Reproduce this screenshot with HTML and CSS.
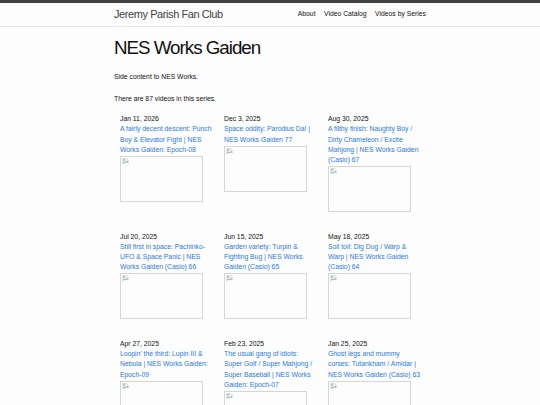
FILE: index.html
```html
<!DOCTYPE html>
<html lang="en">
<head>
<meta charset="utf-8">
<title>NES Works Gaiden | Jeremy Parish Fan Club</title>
<link rel="stylesheet" href="styles.css">
</head>
<body>
<header class="site-header">
  <div class="wrapper header-inner">
    <a class="site-title" href="#">Jeremy Parish Fan Club</a>
    <nav class="site-nav">
      <a class="page-link" href="#">About</a>
      <a class="page-link" href="#">Video Catalog</a>
      <a class="page-link" href="#">Videos by Series</a>
    </nav>
  </div>
</header>
<main class="page-content">
  <div class="wrapper">
    <h1 class="page-heading">NES Works Gaiden</h1>
    <p class="desc">Side content to NES Works.</p>
    <p class="count">There are 87 videos in this series.</p>
    <ul class="video-grid">
      <li class="video">
        <div class="date">Jan 11, 2026</div>
        <a class="title" href="#">A fairly decent descent: Punch Boy &amp; Elevator Fight | NES Works Gaiden: Epoch-08</a>
        <div class="thumb"><svg class="broken" viewBox="0 0 16 16"><path d="M2 1h8l4 4v6l-3-2-3 3-2-2-4 3z" fill="#f4f4f4" stroke="#a8a8a8" stroke-width="1"/><path d="M3 12l3-3 2 2 3-3 3 2" fill="none" stroke="#5a9c4a" stroke-width="1.4"/><rect x="3" y="3" width="4" height="3" fill="#7cb0e0"/></svg></div>
      </li>
      <li class="video">
        <div class="date">Dec 3, 2025</div>
        <a class="title" href="#">Space oddity: Parodius Da! | NES Works Gaiden 77</a>
        <div class="thumb"><svg class="broken" viewBox="0 0 16 16"><path d="M2 1h8l4 4v6l-3-2-3 3-2-2-4 3z" fill="#f4f4f4" stroke="#a8a8a8" stroke-width="1"/><path d="M3 12l3-3 2 2 3-3 3 2" fill="none" stroke="#5a9c4a" stroke-width="1.4"/><rect x="3" y="3" width="4" height="3" fill="#7cb0e0"/></svg></div>
      </li>
      <li class="video">
        <div class="date">Aug 30, 2025</div>
        <a class="title" href="#">A filthy finish: Naughty Boy / Dirty Chameleon / Excite Mahjong | NES Works Gaiden (Casio) 67</a>
        <div class="thumb"><svg class="broken" viewBox="0 0 16 16"><path d="M2 1h8l4 4v6l-3-2-3 3-2-2-4 3z" fill="#f4f4f4" stroke="#a8a8a8" stroke-width="1"/><path d="M3 12l3-3 2 2 3-3 3 2" fill="none" stroke="#5a9c4a" stroke-width="1.4"/><rect x="3" y="3" width="4" height="3" fill="#7cb0e0"/></svg></div>
      </li>
      <li class="video">
        <div class="date">Jul 20, 2025</div>
        <a class="title" href="#">Still first in space: Pachinko-UFO &amp; Space Panic | NES Works Gaiden (Casio) 66</a>
        <div class="thumb"><svg class="broken" viewBox="0 0 16 16"><path d="M2 1h8l4 4v6l-3-2-3 3-2-2-4 3z" fill="#f4f4f4" stroke="#a8a8a8" stroke-width="1"/><path d="M3 12l3-3 2 2 3-3 3 2" fill="none" stroke="#5a9c4a" stroke-width="1.4"/><rect x="3" y="3" width="4" height="3" fill="#7cb0e0"/></svg></div>
      </li>
      <li class="video">
        <div class="date">Jun 15, 2025</div>
        <a class="title" href="#">Garden variety: Turpin &amp; Fighting Bug | NES Works Gaiden (Casio) 65</a>
        <div class="thumb"><svg class="broken" viewBox="0 0 16 16"><path d="M2 1h8l4 4v6l-3-2-3 3-2-2-4 3z" fill="#f4f4f4" stroke="#a8a8a8" stroke-width="1"/><path d="M3 12l3-3 2 2 3-3 3 2" fill="none" stroke="#5a9c4a" stroke-width="1.4"/><rect x="3" y="3" width="4" height="3" fill="#7cb0e0"/></svg></div>
      </li>
      <li class="video">
        <div class="date">May 18, 2025</div>
        <a class="title" href="#">Soil toil: Dig Dug / Warp &amp; Warp | NES Works Gaiden (Casio) 64</a>
        <div class="thumb"><svg class="broken" viewBox="0 0 16 16"><path d="M2 1h8l4 4v6l-3-2-3 3-2-2-4 3z" fill="#f4f4f4" stroke="#a8a8a8" stroke-width="1"/><path d="M3 12l3-3 2 2 3-3 3 2" fill="none" stroke="#5a9c4a" stroke-width="1.4"/><rect x="3" y="3" width="4" height="3" fill="#7cb0e0"/></svg></div>
      </li>
      <li class="video">
        <div class="date">Apr 27, 2025</div>
        <a class="title" href="#">Loopin' the third: Lupin III &amp; Nebula | NES Works Gaiden: Epoch-09</a>
        <div class="thumb"><svg class="broken" viewBox="0 0 16 16"><path d="M2 1h8l4 4v6l-3-2-3 3-2-2-4 3z" fill="#f4f4f4" stroke="#a8a8a8" stroke-width="1"/><path d="M3 12l3-3 2 2 3-3 3 2" fill="none" stroke="#5a9c4a" stroke-width="1.4"/><rect x="3" y="3" width="4" height="3" fill="#7cb0e0"/></svg></div>
      </li>
      <li class="video">
        <div class="date">Feb 23, 2025</div>
        <a class="title" href="#">The usual gang of idiots: Super Golf / Super Mahjong / Super Baseball | NES Works Gaiden: Epoch-07</a>
        <div class="thumb"><svg class="broken" viewBox="0 0 16 16"><path d="M2 1h8l4 4v6l-3-2-3 3-2-2-4 3z" fill="#f4f4f4" stroke="#a8a8a8" stroke-width="1"/><path d="M3 12l3-3 2 2 3-3 3 2" fill="none" stroke="#5a9c4a" stroke-width="1.4"/><rect x="3" y="3" width="4" height="3" fill="#7cb0e0"/></svg></div>
      </li>
      <li class="video">
        <div class="date">Jan 25, 2025</div>
        <a class="title" href="#">Ghost legs and mummy curses: Tutankham / Amidar | NES Works Gaiden (Casio) 63</a>
        <div class="thumb"><svg class="broken" viewBox="0 0 16 16"><path d="M2 1h8l4 4v6l-3-2-3 3-2-2-4 3z" fill="#f4f4f4" stroke="#a8a8a8" stroke-width="1"/><path d="M3 12l3-3 2 2 3-3 3 2" fill="none" stroke="#5a9c4a" stroke-width="1.4"/><rect x="3" y="3" width="4" height="3" fill="#7cb0e0"/></svg></div>
      </li>
    </ul>
  </div>
</main>
</body>
</html>
```

FILE: styles.css
```css
html, body {
  margin: 0;
  padding: 0;
}

body {
  font-family: "Liberation Sans", Arial, Helvetica, sans-serif;
  font-size: 6.8px;
  line-height: 10.2px;
  color: #111111;
  background: #fdfdfd;
}

a {
  text-decoration: none;
}

.wrapper {
  width: 312px;
  margin: 0 auto;
}

.site-header {
  border-top: 3px solid #424242;
  border-bottom: 1px solid #e8e8e8;
}

.header-inner {
  height: 23px;
  display: flex;
  align-items: center;
  justify-content: space-between;
}

.site-title {
  font-size: 11px;
  letter-spacing: -0.42px;
  color: #424242;
  font-weight: 300;
}

.site-nav {
  display: flex;
  gap: 8.5px;
}

.page-link {
  color: #111111;
}

.page-content {
  padding-top: 12px;
}

.page-heading {
  margin: 0 0 14px;
  font-size: 18.75px;
  line-height: 1;
  letter-spacing: -1px;
  font-weight: 400;
}

.desc {
  margin: 0 0 12px;
}

.count {
  margin: 0 0 10px;
}

.video-grid {
  list-style: none;
  margin: 0;
  padding: 0 0 0 6px;
  display: grid;
  grid-template-columns: repeat(3, 93px);
  column-gap: 11px;
  row-gap: 19.5px;
  align-items: start;
}

.video {
  display: flex;
  flex-direction: column;
  align-items: flex-start;
}

.date {
  color: #111111;
}

.title {
  display: block;
  color: #2a7ae2;
}

.thumb {
  box-sizing: border-box;
  width: 83px;
  height: 46px;
  margin-top: 1px;
  border: 1px solid #d6d6d6;
  padding: 1px;
}

.broken {
  display: block;
  width: 7px;
  height: 7px;
}
```
